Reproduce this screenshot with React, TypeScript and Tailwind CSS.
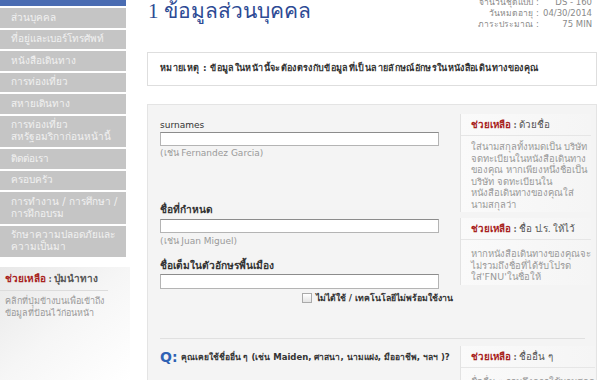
import React from 'react';

const menuItems: string[][] = [
    ['ส่วนบุคคล'],
    ['ที่อยู่และเบอร์โทรศัพท์'],
    ['หนังสือเดินทาง'],
    ['การท่องเที่ยว'],
    ['สหายเดินทาง'],
    ['การท่องเที่ยว', 'สหรัฐอมริกาก่อนหน้านี้'],
    ['ติดต่อเรา'],
    ['ครอบครัว'],
    ['การทำงาน / การศึกษา /', 'การฝึกอบรม'],
    ['รักษาความปลอดภัยและ', 'ความเป็นมา'],
];

const HelpTitle: React.FC<{ topic: string }> = ({ topic }) => (
    <span className="whitespace-nowrap font-['Liberation_Serif',serif] text-[9.8px] leading-[14px]">
        <span className="font-bold text-[#a8231e]">ช่วยเหลือ</span>
        <span className="font-bold text-[#555]"> : </span>
        <span className="text-[#555]">{topic}</span>
    </span>
);

const HelpBox: React.FC<{ topic: string; lines: string[]; className?: string; bodyTop?: string }> = ({ topic, lines, className = '', bodyTop = 'pt-[5px]' }) => (
    <div className={`border-l border-[#e2e2e2] bg-gradient-to-r from-[#fafafa] to-[#f5f5f5] pb-[2px] ${className}`}>
        <div className="pt-[4px] pb-[3px] pl-[10px] border-b border-[#e6e6e6] flex">
            <HelpTitle topic={topic} />
        </div>
        <div className={`${bodyTop} pl-[10px] text-[9.5px] leading-[11.5px] text-[#9a9a9a] whitespace-nowrap`}>
            {lines.map((l, i) => (
                <div key={i}>{l}</div>
            ))}
        </div>
    </div>
);

const TextInput: React.FC<{ className?: string }> = ({ className = '' }) => (
    <div className={`w-[279px] h-[14px] bg-white border border-[#b4b4b4] border-t-[#8c8c8c] ${className}`} />
);

const App: React.FC = () => {
    return (
        <div className="flex w-[600px] h-[380px] overflow-hidden bg-white font-['DejaVu_Sans','Noto_Sans',sans-serif]">
            {/* side navigation */}
            <aside className="w-[130px] shrink-0 flex flex-col">
                <div className="w-[126px] flex flex-col gap-[2px]">
                    <div className="h-[6px] bg-[#4a6cb2]" />
                    {menuItems.map((item, i) => (
                        <div key={i} className="bg-[#c5c5c5] pl-[11px] py-[3.75px] text-[10px] leading-[12px] text-[#f1f1f1] whitespace-nowrap">
                            {item.map((line, j) => (
                                <div key={j}>{line}</div>
                            ))}
                        </div>
                    ))}
                </div>
                <div className="mt-[10px] flex-1 bg-gradient-to-br from-[#e8e8e8] via-[#f6f6f6] to-white">
                    <div className="mr-[22px] pl-[5px] pt-[5px] pb-[4px] border-b border-[#dcdcdc] flex">
                        <span className="whitespace-nowrap font-['Liberation_Serif',serif] text-[10px] leading-[14px] font-bold">
                            <span className="text-[#a8231e]">ช่วยเหลือ</span>
                            <span className="text-[#555]"> : ปุ่มนำทาง</span>
                        </span>
                    </div>
                    <div className="pl-[5px] pt-[5px] text-[9px] leading-[11.5px] text-[#9a9a9a] whitespace-nowrap">
                        <div>คลิกที่ปุ่มข้างบนเพื่อเข้าถึง</div>
                        <div>ข้อมูลที่ป้อนไว้ก่อนหน้า</div>
                    </div>
                </div>
            </aside>

            <main className="w-[450px] ml-[17px] shrink-0">
                {/* header */}
                <div className="h-[52px] flex justify-between items-start">
                    <h1 className="mt-[-1px] ml-[1px] font-['Liberation_Serif',serif] text-[21px] leading-[24px] text-[#2d4a94] whitespace-nowrap">
                        1 ข้อมูลส่วนบุคคล
                    </h1>
                    <div className="mt-[-3.5px] mr-[5px] grid grid-cols-[auto_auto] gap-x-[4px] text-[8.5px] leading-[11px] text-[#8a8a8a]">
                        <span className="text-right">จำนวนชุดแบบ :</span>
                        <span className="text-right">DS - 160</span>
                        <span className="text-right">วันหมดอายุ :</span>
                        <span className="text-right">04/30/2014</span>
                        <span className="text-right">ภาระประมาณ :</span>
                        <span className="text-right">75 MIN</span>
                    </div>
                </div>

                {/* note */}
                <div className="h-[34px] border border-[#dedede] bg-white flex items-center px-[12px]">
                    <p className="text-[9px] tracking-[0.35px] font-bold text-[#333] whitespace-nowrap">
                        หมายเหตุ : ข้อมูลในหน้านี้จะต้องตรงกับข้อมูลที่เป็นลายลักษณ์อักษรในหนังสือเดินทางของคุณ
                    </p>
                </div>

                {/* form panel */}
                <div className="mt-[18px] h-[300px] border border-[#e4e4e4] bg-[#f4f4f4] pl-[12px] pr-[6px]">
                    <div className="grid grid-cols-[300px_1fr] items-start">
                        <div className="pt-[14px] text-[9px] leading-[12px]">
                            <label className="block text-[#333]">surnames</label>
                            <TextInput className="mt-[1px]" />
                            <div className="mt-[1px] text-[#9a9a9a]">(เช่น Fernandez Garcia)</div>

                            <label className="block mt-[45px] text-[10.2px] font-bold text-[#333]">ชื่อที่กำหนด</label>
                            <TextInput className="mt-[3px]" />
                            <div className="mt-[2px] text-[#9a9a9a]">(เช่น Juan Miguel)</div>

                            <label className="block mt-[13px] text-[10.2px] font-bold text-[#333]">ชื่อเต็มในตัวอักษรพื้นเมือง</label>
                            <TextInput className="mt-[2px] h-[15px]" />
                            <div className="mt-[3px] pr-[7px] flex justify-end items-center gap-[4px]">
                                <span className="w-[10px] h-[10px] border border-[#aaa] bg-gradient-to-b from-white to-[#e4e4e4]" />
                                <span className="text-[8.7px] font-bold text-[#333] whitespace-nowrap">ไม่ได้ใช้ / เทคโนโลยีไม่พร้อมใช้งาน</span>
                            </div>
                        </div>
                        <div>
                            <HelpBox
                                className="mt-[9px]"
                                topic="ด้วยชื่อ"
                                lines={[
                                    'ใส่นามสกุลทั้งหมดเป็น บริษัท',
                                    'จดทะเบียนในหนังสือเดินทาง',
                                    'ของคุณ หากเพียงหนึ่งชื่อเป็น',
                                    'บริษัท จดทะเบียนใน',
                                    'หนังสือเดินทางของคุณใส่',
                                    'นามสกุลว่า',
                                ]}
                            />
                            <HelpBox
                                className="mt-[6px]"
                                bodyTop="pt-[8px]"
                                topic="ชื่อ ป.ร. ให้ไว้"
                                lines={[
                                    'หากหนังสือเดินทางของคุณจะ',
                                    'ไม่รวมถึงชื่อที่ได้รับโปรด',
                                    "ใส่'FNU'ในชื่อให้",
                                ]}
                            />
                        </div>
                    </div>

                    <hr className="mt-[34px] mr-[5px] border-t border-[#e0e0e0]" />

                    <div className="grid grid-cols-[300px_1fr] items-start">
                        <div className="mt-[11px] flex items-center gap-[3px] leading-[14px]">
                            <span className="text-[14px] font-bold text-[#2f62b4]">Q:</span>
                            <span className="text-[8.5px] font-bold text-[#333] whitespace-nowrap">
                                คุณเคยใช้ชื่ออื่น ๆ (เช่น Maiden, ศาสนา, นามแฝง, มืออาชีพ, ฯลฯ )?
                            </span>
                        </div>
                        <HelpBox
                            className="mt-[7px]"
                            bodyTop="pt-[8px]"
                            topic="ชื่ออื่น ๆ"
                            lines={['ชื่ออื่น ๆ รวมถึงการใช้นามสกุล']}
                        />
                    </div>
                </div>
            </main>
        </div>
    );
};

export default App;
